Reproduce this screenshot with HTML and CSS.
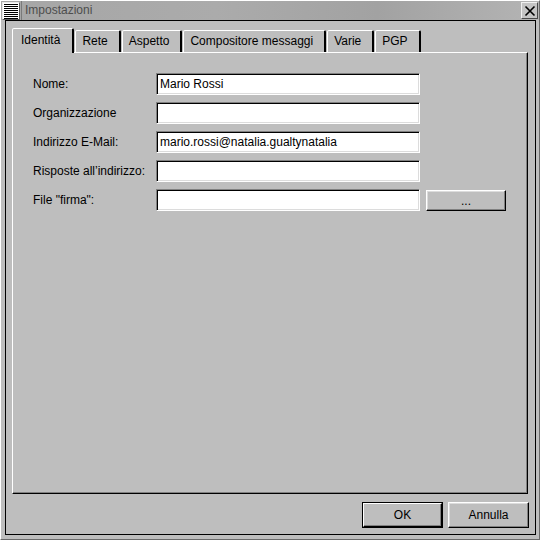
FILE: index.html
```html
<!DOCTYPE html>
<html lang="it">
<head>
<meta charset="utf-8">
<title>Impostazioni</title>
<link rel="stylesheet" href="styles.css">
</head>
<body>
<div class="window">
  <div class="titlebar">
    <div class="menubtn">
      <svg width="16" height="16" viewBox="0 0 16 16">
        <rect x="0" y="0" width="16" height="16" fill="#ffffff"/>
        <g fill="#000000">
          <rect x="1" y="1" width="14" height="1"/>
          <rect x="1" y="3" width="14" height="1"/>
          <rect x="1" y="5" width="14" height="1"/>
          <rect x="1" y="7" width="14" height="1"/>
          <rect x="1" y="9" width="14" height="1"/>
          <rect x="1" y="11" width="14" height="1"/>
          <rect x="1" y="13" width="14" height="1"/>
          <rect x="1" y="15" width="14" height="1"/>
        </g>
      </svg>
    </div>
    <div class="title">Impostazioni</div>
    <div class="closebtn">
      <svg width="12" height="12" viewBox="0 0 12 12">
        <path d="M1.5 1.5 L10.5 10.5 M10.5 1.5 L1.5 10.5" stroke="#000" stroke-width="1.6" fill="none"/>
      </svg>
    </div>
  </div>
  <div class="client">
    <div class="tabs">
      <div class="tab active">Identità</div>
      <div class="tab">Rete</div>
      <div class="tab">Aspetto</div>
      <div class="tab">Compositore messaggi</div>
      <div class="tab">Varie</div>
      <div class="tab">PGP</div>
    </div>
    <div class="panel">
      <div class="form">
        <label class="lbl">Nome:</label>
        <div class="input">Mario Rossi</div>
        <div></div>
        <label class="lbl">Organizzazione</label>
        <div class="input"></div>
        <div></div>
        <label class="lbl">Indirizzo E-Mail:</label>
        <div class="input">mario.rossi@natalia.gualtynatalia</div>
        <div></div>
        <label class="lbl">Risposte all’indirizzo:</label>
        <div class="input"></div>
        <div></div>
        <label class="lbl">File "firma":</label>
        <div class="input"></div>
        <div class="btn small">...</div>
      </div>
    </div>
    <div class="buttons">
      <div class="btn default"><span class="inner">OK</span></div>
      <div class="btn">Annulla</div>
    </div>
  </div>
</div>
</body>
</html>
```

FILE: styles.css
```css
html, body {
  margin: 0;
  padding: 0;
  background: #bebebe;
}
body {
  font-family: "Liberation Sans", Arial, sans-serif;
  font-size: 12px;
  color: #000;
}
.window {
  width: 540px;
  height: 540px;
  box-sizing: border-box;
  background: #bebebe;
  border-style: solid;
  border-width: 1px;
  border-color: #ffffff #6a6a6a #6a6a6a #ffffff;
  display: flex;
  flex-direction: column;
}
.titlebar {
  height: 19px;
  display: flex;
  align-items: center;
  background: linear-gradient(to right, #a6a6a6 0%, #ababab 40%, #a2a2a2 70%, #b4b4b4 100%);
}
.menubtn {
  width: 18px;
  height: 18px;
  box-sizing: border-box;
  margin-left: 1px;
  border-style: solid;
  border-width: 1px;
  border-color: #e8e8e8 #5a5a5a #5a5a5a #e8e8e8;
  display: flex;
  align-items: center;
  justify-content: center;
  background: #ffffff;
}
.menubtn svg { display: block; }
.title {
  flex: 1;
  height: 19px;
  line-height: 19px;
  padding-left: 3px;
  color: #4e4e4e;
  border-left: 1px solid #7a7a7a;
  margin-left: 1px;
}
.closebtn {
  width: 17px;
  height: 17px;
  box-sizing: border-box;
  margin-right: 1px;
  background: #c4c4c4;
  border-style: solid;
  border-width: 1px;
  border-color: #f0f0f0 #4a4a4a #4a4a4a #f0f0f0;
  display: flex;
  align-items: center;
  justify-content: center;
}
.closebtn svg { display: block; }
.client {
  flex: 1;
  margin: 0 3px 4px 4px;
  border: 1px solid #000;
  display: flex;
  flex-direction: column;
  padding: 0 6px 0 6px;
}
.tabs {
  display: flex;
  align-items: flex-end;
  margin-top: 7px;
  height: 24px;
  position: relative;
  z-index: 1;
}
.tab {
  height: 22px;
  box-sizing: border-box;
  line-height: 20px;
  padding: 0 11px 0 6px;
  border-style: solid;
  border-width: 1px 2px 0 1px;
  border-color: #ffffff #000000 transparent #ffffff;
  border-radius: 2px 2px 0 0;
  background: #bebebe;
  white-space: nowrap;
  margin-right: 1px;
}
.tab.active {
  height: 25px;
  margin-bottom: -1px;
  line-height: 23px;
  padding: 0 12px 0 8px;
}
.panel {
  width: 516px;
  height: 442px;
  box-sizing: border-box;
  border-style: solid;
  border-width: 1px;
  border-color: #ffffff #000000 #000000 #ffffff;
  box-shadow: inset -1px -1px 0 #808080;
  padding: 20px 0 0 20px;
}
.form {
  display: grid;
  grid-template-columns: 117px 264px 80px;
  column-gap: 6px;
  row-gap: 7px;
  grid-auto-rows: 22px;
  align-items: center;
}
.lbl {
  white-space: nowrap;
}
.input {
  height: 22px;
  box-sizing: border-box;
  background: #ffffff;
  border-style: solid;
  border-width: 1px;
  border-color: #808080 #ffffff #ffffff #808080;
  box-shadow: inset 1px 1px 0 #000000, inset -1px -1px 0 #dcdcdc;
  padding-left: 3px;
  line-height: 20px;
  white-space: nowrap;
  overflow: hidden;
}
.btn {
  box-sizing: border-box;
  width: 81px;
  height: 26px;
  background: #bebebe;
  border-style: solid;
  border-width: 1px;
  border-color: #ffffff #000000 #000000 #ffffff;
  box-shadow: inset -1px -1px 0 #808080, inset 1px 1px 0 #dcdcdc;
  display: flex;
  align-items: center;
  justify-content: center;
}
.btn.small {
  width: 80px;
  height: 21px;
  padding-top: 2px;
}
.buttons {
  display: flex;
  justify-content: flex-end;
  gap: 5px;
  margin-top: 8px;
  padding-right: 0;
}
.btn.default {
  border: 1px solid #000;
  box-shadow: none;
  padding: 0;
}
.btn.default .inner {
  box-sizing: border-box;
  width: 100%;
  height: 100%;
  border-style: solid;
  border-width: 1px;
  border-color: #ffffff #000000 #000000 #ffffff;
  box-shadow: inset -1px -1px 0 #808080;
  display: flex;
  align-items: center;
  justify-content: center;
}
```
